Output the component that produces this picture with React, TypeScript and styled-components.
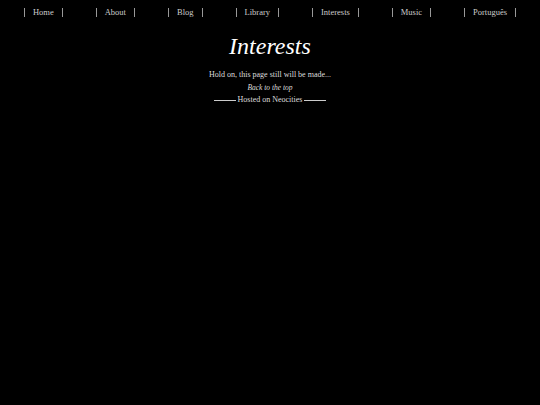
import styled, { createGlobalStyle } from "styled-components";

const Global = createGlobalStyle`
  html, body {
    margin: 0;
    padding: 0;
    background: #000;
    color: #ddd;
    font-family: "Liberation Serif", "DejaVu Serif", serif;
  }
`;

const Page = styled.div`
  width: 540px;
  min-height: 405px;
  background: #000;
  display: flex;
  flex-direction: column;
  align-items: center;
`;

const Nav = styled.ul`
  list-style: none;
  margin: 0;
  padding: 8px 0 0;
  display: flex;
  justify-content: center;
  gap: 33px;
`;

const NavItem = styled.li`
  border-left: 1px solid #999;
  border-right: 1px solid #999;
  padding: 0 8px;
  font-size: 8.5px;
  line-height: 9px;
  color: #ccc;
`;

const Title = styled.h1`
  margin: 15px 0 0;
  font-size: 24px;
  font-style: italic;
  font-weight: normal;
  color: #fff;
  line-height: 28px;
`;

const Note = styled.p`
  margin: 10px 0 0;
  font-size: 8px;
  line-height: 10px;
  color: #ddd;
`;

const TopLink = styled.a`
  margin-top: 3px;
  font-size: 7.5px;
  line-height: 9px;
  font-style: italic;
  color: #ddd;
  text-decoration: none;
`;

const Footer = styled.div`
  margin-top: 3px;
  display: flex;
  align-items: center;
  gap: 2px;
  font-size: 8px;
  line-height: 10px;
  color: #ddd;
  &::before,
  &::after {
    content: "";
    width: 22px;
    height: 1px;
    background: #ccc;
  }
`;

const links = ["Home", "About", "Blog", "Library", "Interests", "Music", "Português"];

export default function App() {
  return (
    <Page>
      <Global />
      <Nav>
        {links.map((l) => (
          <NavItem key={l}>{l}</NavItem>
        ))}
      </Nav>
      <Title>Interests</Title>
      <Note>Hold on, this page still will be made...</Note>
      <TopLink href="#">Back to the top</TopLink>
      <Footer>Hosted on Neocities</Footer>
    </Page>
  );
}
